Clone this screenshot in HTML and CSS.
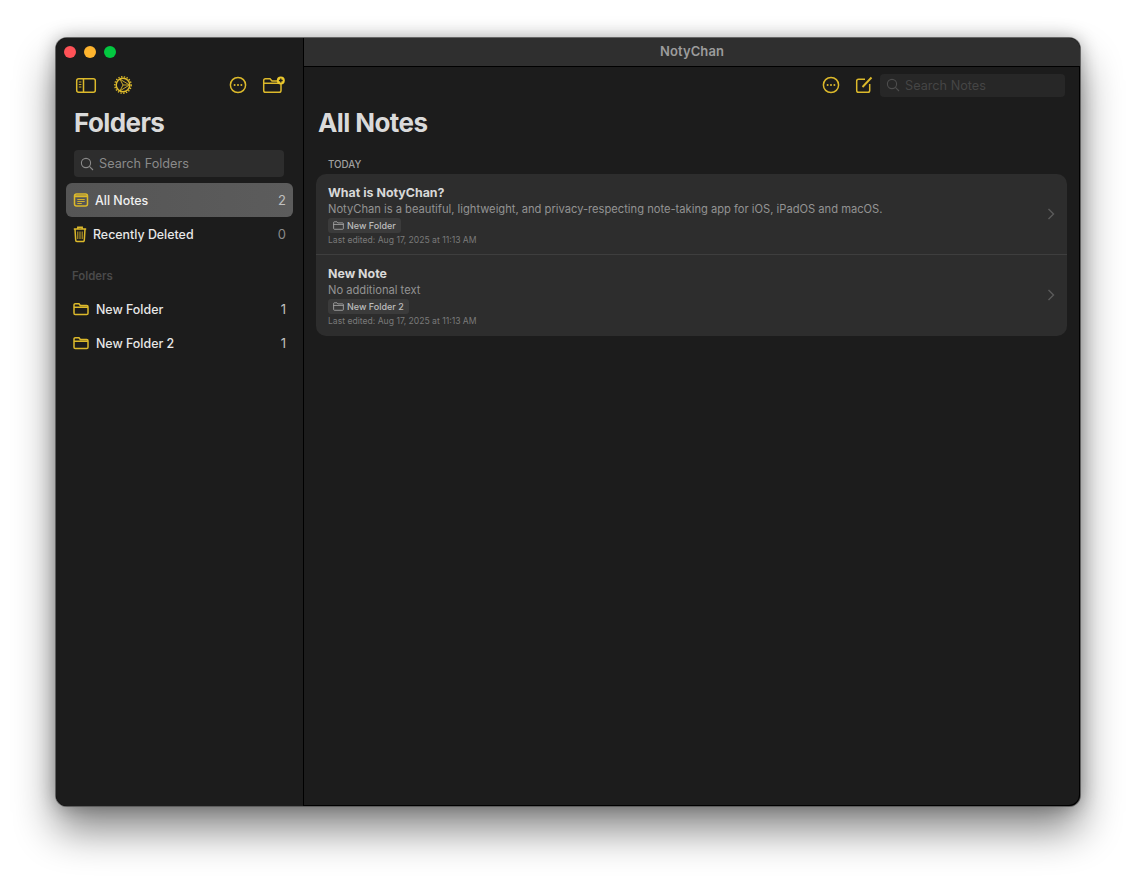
FILE: index.html
```html
<!DOCTYPE html>
<html lang="en">
<head>
<meta charset="utf-8">
<title>NotyChan</title>
<link rel="stylesheet" href="styles.css">
</head>
<body>
<div class="window">
  <aside class="sidebar">
    <div class="traffic">
      <span class="light red"></span><span class="light amber"></span><span class="light green"></span>
    </div>
    <div class="side-tools">
      <div class="tool-group">
        <svg class="ico w22" viewBox="0 0 22 18"><rect x="1.700" y="2.700" width="18.600" height="13.600" rx="2"/><path d="M8.500 2.700v13.600"/><path class="thin" d="M3.800 6h2.600M3.800 8.500h2.600M3.800 11h2.600"/></svg>
        <svg class="ico w20" viewBox="0 0 20 20"><circle cx="10" cy="10" r="6.800"/><circle class="dash" cx="10" cy="10" r="8.200"/><path class="thin" d="M7 4.200 10 10l-3 5.800M10 10h6.800M7 4.200l9.500 5.800L7 15.800"/></svg>
      </div>
      <div class="tool-group">
        <svg class="ico w18" viewBox="0 0 18 18"><circle cx="9" cy="9" r="7.600"/><g class="dots"><circle cx="5.600" cy="9" r="1"/><circle cx="9" cy="9" r="1"/><circle cx="12.400" cy="9" r="1"/></g></svg>
        <svg class="ico w24" viewBox="0 0 24 18"><path d="M1.700 5V14.500a1.800 1.800 0 0 0 1.800 1.800h13.700a1.800 1.800 0 0 0 1.800-1.800V6.800a1.800 1.800 0 0 0-1.800-1.800H10L8 2.700H3.500A1.800 1.800 0 0 0 1.700 4.500ZM1.700 7.300H18.500"/><circle class="solid" cx="18.800" cy="4.500" r="4"/><path class="plus" d="M16.900 4.500h3.800M18.800 2.600v3.800"/></svg>
      </div>
    </div>
    <h1 class="big-title side-title">Folders</h1>
    <div class="search side-search">
      <svg class="glass" viewBox="0 0 14 14"><circle cx="6" cy="6" r="4.600"/><path d="m9.400 9.400 3.600 3.600"/></svg>
      <span>Search Folders</span>
    </div>
    <nav class="nav-list">
      <div class="nav-row selected">
        <svg class="ico nav-ico" viewBox="0 0 16 16"><rect x="1.500" y="2" width="13" height="12" rx="2"/><path class="band" d="M1.500 4.300h13"/><path class="thin" d="M4.300 7.500h7.400M4.300 9.500h7.400M4.300 11.500h4.500"/></svg>
        <span class="nav-label">All Notes</span><span class="count">2</span>
      </div>
      <div class="nav-row trash-row">
        <svg class="ico nav-ico" viewBox="0 0 14 18"><path d="M.8 4h12.400M4.800 4V2.200h4.400V4M2 4l.7 11.300a1.200 1.200 0 0 0 1.200 1.200h6.200a1.200 1.200 0 0 0 1.200-1.200L12 4"/><path class="thin" d="M4.800 6.500v7.500M7 6.500v7.500M9.200 6.500v7.500"/></svg>
        <span class="nav-label">Recently Deleted</span><span class="count dim">0</span>
      </div>
    </nav>
    <div class="section-label">Folders</div>
    <nav class="nav-list">
      <div class="nav-row folder-row">
        <svg class="ico nav-ico folder" viewBox="0 0 16 14"><path d="M1 3.500v7.700a1.300 1.300 0 0 0 1.300 1.300h11.400a1.300 1.300 0 0 0 1.300-1.300V4.700a1.300 1.300 0 0 0-1.300-1.300H7.300L6 1.700H2.300A1.300 1.300 0 0 0 1 3Zm0 1.800h14"/></svg>
        <span class="nav-label">New Folder</span><span class="count">1</span>
      </div>
      <div class="nav-row folder-row">
        <svg class="ico nav-ico folder" viewBox="0 0 16 14"><path d="M1 3.500v7.700a1.300 1.300 0 0 0 1.300 1.300h11.400a1.300 1.300 0 0 0 1.300-1.300V4.700a1.300 1.300 0 0 0-1.300-1.300H7.300L6 1.700H2.300A1.300 1.300 0 0 0 1 3Zm0 1.800h14"/></svg>
        <span class="nav-label">New Folder 2</span><span class="count">1</span>
      </div>
    </nav>
  </aside>
  <main class="content">
    <header class="titlebar">NotyChan</header>
    <div class="content-tools">
      <svg class="ico w18" viewBox="0 0 18 18"><circle cx="9" cy="9" r="7.600"/><g class="dots"><circle cx="5.600" cy="9" r="1"/><circle cx="9" cy="9" r="1"/><circle cx="12.400" cy="9" r="1"/></g></svg>
      <svg class="ico w18 compose" viewBox="0 0 18 18"><path d="M10 3.300H3.500a1.800 1.800 0 0 0-1.800 1.800v9.400a1.800 1.800 0 0 0 1.800 1.800h9.400a1.800 1.800 0 0 0 1.800-1.800V8"/><path class="pen" d="M7.500 11 16.500 1.500"/></svg>
      <div class="search notes-search">
        <svg class="glass" viewBox="0 0 14 14"><circle cx="6" cy="6" r="4.600"/><path d="m9.400 9.400 3.600 3.600"/></svg>
        <span>Search Notes</span>
      </div>
    </div>
    <h1 class="big-title notes-title">All Notes</h1>
    <div class="day-label">TODAY</div>
    <section class="note-card">
      <article class="note">
        <div class="note-body">
          <div class="note-title">What is NotyChan?</div>
          <div class="note-preview">NotyChan is a beautiful, lightweight, and privacy-respecting note-taking app for iOS, iPadOS and macOS.</div>
          <div class="tag"><svg class="tag-ico" viewBox="0 0 12 10"><path d="M.6 2.300v6a.9.9 0 0 0 .9.9h9a.9.9 0 0 0 .9-.9V3a.9.9 0 0 0-.9-.9H5.300L4.300.9H1.500A.9.9 0 0 0 .6 1.800Zm0 1.500h10.800"/></svg>New Folder</div>
          <div class="note-date">Last edited: Aug 17, 2025 at 11:13 AM</div>
        </div>
        <svg class="chev" viewBox="0 0 8 12"><path d="m1.500 1 5 5-5 5"/></svg>
      </article>
      <article class="note">
        <div class="note-body">
          <div class="note-title">New Note</div>
          <div class="note-preview">No additional text</div>
          <div class="tag"><svg class="tag-ico" viewBox="0 0 12 10"><path d="M.6 2.300v6a.9.9 0 0 0 .9.9h9a.9.9 0 0 0 .9-.9V3a.9.9 0 0 0-.9-.9H5.300L4.300.9H1.500A.9.9 0 0 0 .6 1.800Zm0 1.500h10.800"/></svg>New Folder 2</div>
          <div class="note-date">Last edited: Aug 17, 2025 at 11:13 AM</div>
        </div>
        <svg class="chev" viewBox="0 0 8 12"><path d="m1.500 1 5 5-5 5"/></svg>
      </article>
    </section>
  </main>
</div>
</body>
</html>
```
FILE: styles.css
```css
* { box-sizing: border-box; }
html, body { margin: 0; height: 100%; }
body {
  background: #fff;
  padding: 38px 56px 0;
  font-family: Inter, "Liberation Sans", sans-serif;
  overflow: hidden;
  -webkit-font-smoothing: antialiased;
}
.window {
  width: 1024px;
  height: 768px;
  display: flex;
  background: #1c1c1c;
  border-radius: 11px;
  box-shadow: 0 0 0 1px #000 inset, 0 0 0 1px rgba(90,90,90,.9), 0 24px 42px rgba(0,0,0,.48), 0 0 18px rgba(0,0,0,.3);
  overflow: hidden;
}
.sidebar {
  width: 248px;
  flex: none;
  background: #1c1c1c;
  border-right: 1px solid #000;
  padding: 8px 10px 0;
  display: flex;
  flex-direction: column;
}
.traffic { display: flex; gap: 8px; margin-left: -2px; height: 12px; }
.light { width: 12px; height: 12px; border-radius: 50%; }
.red { background: #ff5257; }
.amber { background: #feb42e; }
.green { background: #03c840; }
.side-tools {
  display: flex;
  justify-content: space-between;
  align-items: center;
  margin-top: 17px;
  height: 20px;
  padding: 0 7px 0 9px;
}
.tool-group { display: flex; align-items: center; gap: 15px; }
.tool-group:first-child { gap: 16px; }
.ico { fill: none; stroke: #dcb92b; stroke-width: 1.500; display: block; }
.ico .thin { stroke-width: .900; }
.ico .band { stroke-width: 2; }
.ico .pen { stroke-width: 1.900; }
.ico .dash { stroke-dasharray: 1.400 1.400; stroke-width: 1.400; }
.ico .dots circle { fill: #dcb92b; stroke: none; }
.ico .solid { fill: #ebc82d; stroke: none; }
.ico .plus { stroke: #1c1c1c; stroke-width: 1.300; }
.w22 { width: 22px; height: 18px; }
.w20 { width: 20px; height: 20px; }
.w18 { width: 18px; height: 18px; }
.w24 { width: 24px; height: 18px; }
.big-title {
  margin: 0;
  font-size: 26px;
  line-height: 32px;
  font-weight: 700;
  letter-spacing: -.6px;
  color: #dadada;
}
.side-title { margin: 12px 0 0 8px; }
.search {
  display: flex;
  align-items: center;
  border-radius: 4px;
  background: #2d2d2d;
  color: #8a8a8a;
  font-size: 12.700px;
}
.side-search {
  height: 27px;
  margin: 11px 9px 0 8px;
  padding-left: 6px;
  gap: 5px;
}
.glass { width: 14px; height: 14px; fill: none; stroke: #8a8a8a; stroke-width: 1.100; }
.nav-list { display: flex; flex-direction: column; }
.side-search + .nav-list { margin-top: 6px; }
.nav-row {
  height: 34px;
  display: flex;
  align-items: center;
  border-radius: 6px;
  padding: 0 7px;
  color: #e8e8e8;
  font-size: 12.400px;
  font-weight: 500;
}
.selected { background: linear-gradient(90deg, #555 0%, #5c5c5c 100%); color: #f0f0f0; }
.nav-ico { width: 16px; height: 16px; margin-right: 6px; flex: none; }
.trash-row .nav-ico { width: 14px; height: 18px; margin-right: 6px; }
.folder-row .nav-ico { height: 14px; margin-right: 7px; }
.nav-label { flex: 1; }
.count { color: #c0c0c0; font-weight: 400; font-size: 13px; }
.count.dim { color: #8a8a8a; }
.section-label {
  margin: 17px 0 0 6px;
  height: 24px;
  font-size: 11.400px;
  line-height: 16px;
  font-weight: 600;
  color: #4a4a4a;
}
.content { flex: 1; min-width: 0; display: flex; flex-direction: column; }
.titlebar {
  height: 29px;
  background: #2f2f2f;
  border-bottom: 1px solid #000;
  text-align: center;
  font-size: 13px;
  line-height: 26px;
  font-weight: 600;
  letter-spacing: .1px;
  color: #9c9c9c;
}
.content-tools {
  display: flex;
  justify-content: flex-end;
  align-items: center;
  height: 36px;
  padding: 0 15px 0 0;
  gap: 15px;
}
.compose { margin-right: -8px; }
.notes-search {
  width: 185px;
  height: 23px;
  padding-left: 6px;
  gap: 5px;
  background: #272727;
  color: #454545;
}
.notes-search .glass { stroke: #4d4d4d; }
.notes-title { margin: 4px 0 0 14px; }
.day-label {
  margin: 19px 0 0 24px;
  height: 16px;
  font-size: 9.800px;
  line-height: 14px;
  font-weight: 500;
  color: #a0a0a0;
}
.note-card {
  margin: 0 13px 0 12px;
  background: #2d2d2d;
  border-radius: 10px;
  overflow: hidden;
}
.note {
  height: 80px;
  display: flex;
  align-items: center;
  justify-content: space-between;
  padding: 0 12px;
}
.note + .note { height: 82px; padding-bottom: 2px; border-top: 1px solid #3e3e3e; }
.note-body { padding-top: 3px; }
.note-title { font-size: 12.400px; line-height: 16px; font-weight: 700; color: #d8d8d8; }
.note-preview { font-size: 11.160px; line-height: 15px; color: #939393; margin-top: 1px; }
.tag {
  display: flex;
  width: fit-content;
  align-items: center;
  gap: 3px;
  height: 15px;
  margin-top: 1px;
  padding: 0 5px;
  border-radius: 3px;
  background: #3b3b3b;
  font-size: 9px;
  font-weight: 500;
  color: #bdbdbd;
}
.tag-ico { width: 11px; height: 9px; fill: none; stroke: #bdbdbd; stroke-width: .800; }
.note-date { font-size: 8.600px; line-height: 12px; margin-top: 1px; color: #7a7a7a; }
.chev { width: 8px; height: 12px; fill: none; stroke: #5b5b5b; stroke-width: 1.400; flex: none; }
```
